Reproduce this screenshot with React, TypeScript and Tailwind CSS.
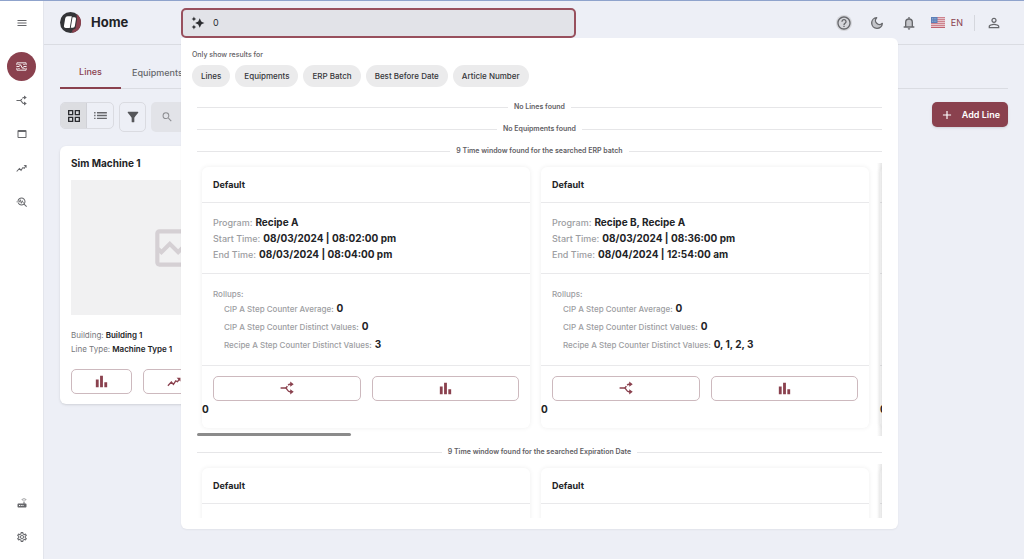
import { useState } from "react";
import type { ReactNode } from "react";
import {
    MdAdd,
    MdAutoAwesome,
    MdBarChart,
    MdFilterAlt,
    MdGridView,
    MdHelpOutline,
    MdList,
    MdMenu,
    MdOutlineBrokenImage,
    MdOutlineSettings,
    MdPersonOutline,
    MdRouter,
    MdSearch,
    MdTimeline,
    MdTroubleshoot,
    MdWebAsset,
} from "react-icons/md";

interface TimeWindow {
    program: string;
    start: string;
    end: string;
    rollups: { label: string; value: string }[];
}

const timeWindows: TimeWindow[] = [
    {
        program: "Recipe A",
        start: "08/03/2024 | 08:02:00 pm",
        end: "08/03/2024 | 08:04:00 pm",
        rollups: [
            { label: "CIP A Step Counter Average:", value: "0" },
            { label: "CIP A Step Counter Distinct Values:", value: "0" },
            { label: "Recipe A Step Counter Distinct Values:", value: "3" },
        ],
    },
    {
        program: "Recipe B, Recipe A",
        start: "08/03/2024 | 08:36:00 pm",
        end: "08/04/2024 | 12:54:00 am",
        rollups: [
            { label: "CIP A Step Counter Average:", value: "0" },
            { label: "CIP A Step Counter Distinct Values:", value: "0" },
            { label: "Recipe A Step Counter Distinct Values:", value: "0, 1, 2, 3" },
        ],
    },
    {
        program: "Recipe B",
        start: "08/04/2024 | 01:10:00 am",
        end: "08/04/2024 | 02:20:00 am",
        rollups: [
            { label: "CIP A Step Counter Average:", value: "0" },
            { label: "CIP A Step Counter Distinct Values:", value: "0" },
            { label: "Recipe A Step Counter Distinct Values:", value: "1" },
        ],
    },
];

const filters = ["Lines", "Equipments", "ERP Batch", "Best Before Date", "Article Number"];

function Logo() {
    return (
        <svg viewBox="0 0 42 42" className="size-[21px] shrink-0" aria-hidden="true">
            <circle cx="21" cy="21" r="21" fill="#343538" />
            <path d="M33 3.800a21 21 0 0 1-9 38l1-6 6-3 3-18z" fill="#8a414e" />
            <path d="M15.500 8.500h8l-4 23.500h-7.500a4 4 0 0 1-4-4.800l2.500-14.500a5 5 0 0 1 5-4.200z" fill="#fff" />
            <path d="M25 10.500h4a3 3 0 0 1 3 3.500l-2.300 14a4 4 0 0 1-4 3.500h-4.200z" fill="#fff" />
        </svg>
    );
}

function SplitIcon({ className }: { className?: string }) {
    return (
        <svg viewBox="0 0 24 24" className={className} fill="none" stroke="currentColor" strokeWidth="2.400" aria-hidden="true">
            <path d="M1 12h8c4 0 3 6.500 8 6.500h2M9 12c2 0 2.500-1.500 3.500-3.200M14 7.200c.8-1 1.800-1.700 3-1.700h2" />
            <path d="M17.500 1l6 4.500-6 4.500zM17.500 14l6 4.500-6 4.500z" fill="currentColor" stroke="none" />
        </svg>
    );
}

function TrendIcon({ className }: { className?: string }) {
    return (
        <svg viewBox="0 0 24 24" className={className} fill="none" stroke="currentColor" strokeWidth="2.200" aria-hidden="true">
            <path d="M1.500 18.500l6-6.500 3.500 4 4-6 3 1.500 3.500-5" />
            <path d="M16.500 4.500h6.500v6.500z" fill="currentColor" stroke="none" />
        </svg>
    );
}

function LinesIcon({ className }: { className?: string }) {
    return (
        <svg viewBox="0 0 24 24" className={className} fill="none" stroke="currentColor" strokeWidth="2" aria-hidden="true">
            <path d="M2 9V4h20v5M2 15v5h20v-5M1 12h6l3-4 4 8 3-4h6" />
            <path d="M5 7.500h3M16 7.500h3M5 16.500h3M16 16.500h3" />
        </svg>
    );
}

function MoonIcon({ className }: { className?: string }) {
    return (
        <svg viewBox="0 0 24 24" className={className} fill="#c4c5ca" stroke="currentColor" strokeWidth="2" strokeLinejoin="round" aria-hidden="true">
            <path d="M11.500 4a8 8 0 1 0 8.500 8.500 5.500 5.500 0 0 1-8.500-8.500z" />
        </svg>
    );
}

function BellIcon({ className }: { className?: string }) {
    return (
        <svg viewBox="0 0 24 24" className={className} fill="#c4c5ca" stroke="currentColor" strokeWidth="2" aria-hidden="true">
            <path d="M7 17.500v-6.500a5 5 0 0 1 10 0v6.500M4 18h16M12 3v3" />
            <path d="M10 20h4a2 2 0 0 1-4 0z" fill="currentColor" stroke="none" />
        </svg>
    );
}

function Flag() {
    return (
        <svg viewBox="0 0 28 22" className="h-[11px] w-3.5" aria-hidden="true">
            <rect width="28" height="22" fill="#f2e6ea" />
            <path d="M0 1.500h28M0 5.500h28M0 9.500h28M0 13.500h28M0 17.500h28M0 21h28" stroke="#c0626f" strokeWidth="2" />
            <rect width="13" height="12" fill="#5b7fb8" />
            <path d="M2 3h9M2 6h9M2 9h9" stroke="#dfe7f3" strokeWidth="1" strokeDasharray="1.500 2" />
        </svg>
    );
}

function NavButton({ label, children }: { label: string; children: ReactNode }) {
    return (
        <button aria-label={label} className="flex h-[34px] w-full items-center justify-center text-[#66676b]">
            {children}
        </button>
    );
}

function Sidebar() {
    return (
        <nav className="flex w-11 shrink-0 flex-col border-r border-[#e3e5ec] bg-white pt-[5px] pb-[5px]">
            <NavButton label="Menu"><MdMenu className="size-3" /></NavButton>
            <div className="flex justify-center pt-3 pb-0.5">
                <button aria-label="Lines" className="flex size-[29px] items-center justify-center rounded-full bg-[#8a414e] text-white">
                    <LinesIcon className="size-[11px]" />
                </button>
            </div>
            <NavButton label="Routes"><SplitIcon className="size-[11px]" /></NavButton>
            <NavButton label="Windows"><MdWebAsset className="size-3" /></NavButton>
            <NavButton label="Trends"><TrendIcon className="size-[11px]" /></NavButton>
            <NavButton label="Analysis"><MdTroubleshoot className="size-3" /></NavButton>
            <div className="mt-auto">
                <NavButton label="Gateway"><MdRouter className="size-3" /></NavButton>
                <NavButton label="Settings"><MdOutlineSettings className="size-3" /></NavButton>
            </div>
        </nav>
    );
}

function SectionTitle({ children }: { children: ReactNode }) {
    return (
        <div className="flex h-[22px] items-center gap-1.5 text-[7px] font-semibold text-[#5f6064]">
            <span className="h-px flex-1 bg-[#e6e6e8]" />
            <h3>{children}</h3>
            <span className="h-px flex-1 bg-[#e6e6e8]" />
        </div>
    );
}

function Field({ label, value }: { label: string; value: string }) {
    return (
        <p className="flex h-4 items-center gap-[3px] text-[10px] font-bold text-[#222326]">
            <span className="text-[9px] font-medium text-[#9c9da1]">{label}</span>
            {value}
        </p>
    );
}

function WindowCard({ item }: { item: TimeWindow }) {
    return (
        <article className="w-[328px] shrink-0 rounded-md bg-white pb-[11px] shadow-[0_0_5px_rgba(0,0,0,0.07)]">
            <h4 className="border-b border-[#e9e9eb] px-[11px] text-[9px] leading-[35px] font-bold text-[#222326]">Default</h4>
            <div className="border-b border-[#e9e9eb] px-[11px] pt-3 pb-2.5">
                <Field label="Program:" value={item.program} />
                <Field label="Start Time:" value={item.start} />
                <Field label="End Time:" value={item.end} />
            </div>
            <div className="border-b border-[#e9e9eb] px-[11px] pt-3.5 pb-[11px] text-[8px] font-medium text-[#9c9da1]">
                <p className="leading-3">Rollups:</p>
                <ul className="pl-[11px]">
                    {item.rollups.map((rollup) => (
                        <li key={rollup.label} className="flex h-[18px] items-center gap-[3px]">
                            {rollup.label}
                            <span className="text-[10px] font-bold text-[#222326]">{rollup.value}</span>
                        </li>
                    ))}
                </ul>
            </div>
            <div className="flex gap-[11px] px-[11px] pt-2.5 text-[#8a414e]">
                <button aria-label="Show route" className="flex h-[25px] flex-1 items-center justify-center rounded-[5px] border border-[#cdb9be]">
                    <SplitIcon className="size-3.5" />
                </button>
                <button aria-label="Show chart" className="flex h-[25px] flex-1 items-center justify-center rounded-[5px] border border-[#cdb9be]">
                    <MdBarChart className="size-[17px]" />
                </button>
            </div>
            <p className="text-[10px] leading-4 font-bold text-[#222326]">0</p>
        </article>
    );
}

function WindowRow() {
    return (
        <div className="relative">
            <div className="flex gap-[11px] overflow-hidden px-[5px] pt-1 pb-[5px]">
                {timeWindows.map((item) => (
                    <WindowCard key={item.start} item={item} />
                ))}
            </div>
            <span className="pointer-events-none absolute inset-y-0 right-0 w-[5px] bg-linear-to-r from-transparent to-black/10" />
            <div className="h-[3px] w-[154px] rounded-full bg-[#8b8b8b]" />
        </div>
    );
}

function SearchResults() {
    return (
        <div className="absolute top-full left-0 z-10 flex max-h-[88vh] w-[70vw] flex-col rounded-b-md rounded-tr-md bg-white pt-3 pr-4 pb-[11px] pl-[11px] shadow-xs">
            <p className="text-[7px] leading-2.5 font-medium text-[#5f6064]">Only show results for</p>
            <div className="mt-[5px] flex shrink-0 gap-[5px]">
                {filters.map((filter) => (
                    <button key={filter} className="h-[22px] rounded-full bg-[#ebebec] px-[9px] text-[8px] font-medium text-[#35363a]">
                        {filter}
                    </button>
                ))}
            </div>
            <div className="mt-2.5 ml-[5px] min-h-0 overflow-hidden">
                <SectionTitle>No Lines found</SectionTitle>
                <SectionTitle>No Equipments found</SectionTitle>
                <SectionTitle>9 Time window found for the searched ERP batch</SectionTitle>
                <WindowRow />
                <div className="mt-1.5">
                    <SectionTitle>9 Time window found for the searched Expiration Date</SectionTitle>
                </div>
                <WindowRow />
            </div>
        </div>
    );
}

function Header() {
    const [query, setQuery] = useState("0");

    return (
        <header className="flex h-11 items-center border-b border-[#dadce2] px-4">
            <div className="flex w-[121px] shrink-0 items-center gap-2.5">
                <Logo />
                <h1 className="text-[13px] font-bold text-[#222326]">Home</h1>
            </div>
            <div className="relative w-5/12">
                <label className="flex h-[30px] items-center gap-2 rounded-[5px] border-2 border-[#98505d] bg-[#e2e3e8] px-2 text-[#2b2c30]">
                    <MdAutoAwesome className="size-3.5 shrink-0 -scale-x-100" />
                    <input
                        type="text"
                        aria-label="Search"
                        value={query}
                        onChange={(e) => setQuery(e.target.value)}
                        className="w-full bg-transparent text-[9px] outline-none"
                    />
                </label>
                {query && <SearchResults />}
            </div>
            <div className="ml-auto flex items-center text-[#66676b]">
                <button aria-label="Help" className="mr-[17px] rounded-full bg-[#d5d6db]"><MdHelpOutline className="size-4" /></button>
                <button aria-label="Dark mode" className="mr-4"><MoonIcon className="size-4" /></button>
                <button aria-label="Notifications" className="mr-3.5"><BellIcon className="size-4" /></button>
                <button className="flex items-center gap-1.5 text-[9px] text-[#8a414e]">
                    <Flag />
                    EN
                </button>
                <span className="mx-[11px] h-4 w-px bg-[#d5d7dd]" />
                <button aria-label="Account" className="mr-1.5"><MdPersonOutline className="size-4" /></button>
            </div>
        </header>
    );
}

function MachineCard() {
    return (
        <article className="mt-3.5 w-[228px] rounded-md bg-white px-[11px] pb-2.5 shadow-sm">
            <h2 className="text-[10px] leading-[34px] font-bold text-[#222326]">Sim Machine 1</h2>
            <div className="flex h-[135px] items-center justify-center bg-[#f1f1f2] text-[#d5d0d4]">
                <MdOutlineBrokenImage className="size-[50px]" />
            </div>
            <div className="pt-[13px] pb-[13px] text-[8px] leading-3.5 font-semibold text-[#222326]">
                <p><span className="font-normal text-[#77787c]">Building:</span> Building 1</p>
                <p><span className="font-normal text-[#77787c]">Line Type:</span> Machine Type 1</p>
            </div>
            <div className="flex gap-[11px] text-[#8a414e]">
                <button aria-label="Chart" className="flex h-[25px] flex-1 items-center justify-center rounded-[5px] border border-[#cdb9be]">
                    <MdBarChart className="size-[17px]" />
                </button>
                <button aria-label="Trend" className="flex h-[25px] flex-1 items-center justify-center rounded-[5px] border border-[#cdb9be]">
                    <TrendIcon className="size-3.5" />
                </button>
                <button aria-label="Timeline" className="flex h-[25px] flex-1 items-center justify-center rounded-[5px] border border-[#cdb9be]">
                    <MdTimeline className="size-3.5" />
                </button>
            </div>
        </article>
    );
}

export default function App() {
    return (
        <div className="flex min-h-screen border-t border-[#8fa3cc] bg-[#edeff6] font-['Inter',sans-serif]">
            <Sidebar />
            <div className="min-w-0 flex-1">
                <Header />
                <main className="px-4 pt-3">
                    <div className="flex h-8 border-b border-[#dadce2] text-[9px] font-medium text-[#66676b]">
                        <button className="-mb-px w-[61px] border-b-2 border-[#8a414e] text-[#8a414e]">Lines</button>
                        <button className="px-[11px]">Equipments</button>
                    </div>
                    <div className="flex items-start gap-[5px] pt-[13px]">
                        <div className="flex h-[27px] overflow-hidden rounded-[5px] border border-[#dadbe1]">
                            <button aria-label="Grid view" className="flex w-[26px] items-center justify-center border-r border-[#d0d1d7] bg-[#dcdde1] text-[#2b2c30]">
                                <MdGridView className="size-4" />
                            </button>
                            <button aria-label="List view" className="flex w-[26px] items-center justify-center text-[#66676b]">
                                <MdList className="size-[17px]" />
                            </button>
                        </div>
                        <button aria-label="Filter" className="flex h-[30px] w-[27px] items-center justify-center rounded-[5px] border border-[#dadbe1] text-[#55565a]">
                            <MdFilterAlt className="size-4" />
                        </button>
                        <label className="flex h-[30px] w-52 items-center gap-2 rounded-[5px] bg-[#e2e3e8] px-2.5 text-[#8d8e92]">
                            <MdSearch className="size-3.5" />
                            <input type="search" aria-label="Search lines" className="w-full bg-transparent text-[9px] outline-none" />
                        </label>
                        <button className="ml-auto flex h-[25px] items-center gap-2 rounded-[5px] bg-[#8a414e] px-2 text-[9px] font-semibold text-white shadow">
                            <MdAdd className="size-3.5" />
                            Add Line
                        </button>
                    </div>
                    <MachineCard />
                </main>
            </div>
        </div>
    );
}
